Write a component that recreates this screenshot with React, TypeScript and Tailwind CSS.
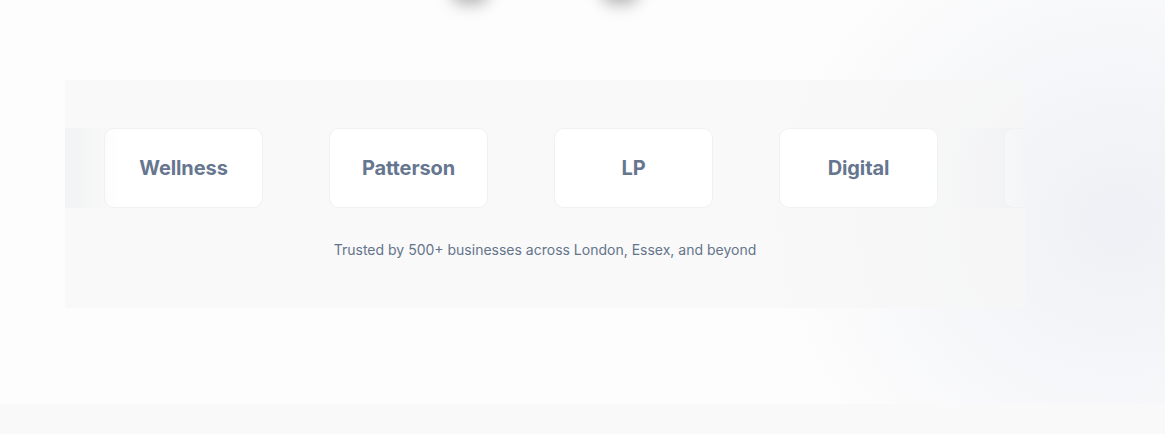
import React from "react";

const logos = ["Wellness", "Patterson", "LP", "Digital", ""];

export default function App() {
  return (
    <div className="relative w-[1165px] h-[434px] overflow-hidden bg-[#fdfdfd] font-['Inter',sans-serif]">
      {/* background glow right */}
      <div className="pointer-events-none absolute left-[760px] top-[-120px] w-[720px] h-[680px] rounded-full bg-[radial-gradient(closest-side,rgba(236,238,244,0.85),rgba(242,243,247,0.5)_60%,rgba(253,253,253,0))]" />
      {/* top shadow blobs */}
      <div className="pointer-events-none absolute left-[451px] top-[-22px] w-[38px] h-[26px] rounded-full bg-[rgba(0,0,0,0.3)] blur-[8px]" />
      <div className="pointer-events-none absolute left-[601px] top-[-22px] w-[38px] h-[26px] rounded-full bg-[rgba(0,0,0,0.3)] blur-[8px]" />

      <div className="relative pt-[80px]">
        <section className="ml-[65px] w-[960px] h-[228px] bg-[rgba(246,246,247,0.7)] flex flex-col">
          <div className="relative mt-[48px] h-[80px] overflow-hidden">
            <div className="flex gap-[66px] pl-[39px]">
              {logos.map((l, i) => (
                <div
                  key={i}
                  className="shrink-0 w-[159px] h-[80px] rounded-[10px] bg-white border border-[#f0f1f3] flex items-center justify-center"
                >
                  <span className="text-[20px] font-bold text-[#66768f] tracking-[-0.1px]">{l}</span>
                </div>
              ))}
            </div>
            <div className="pointer-events-none absolute left-0 top-0 h-full w-[56px] bg-gradient-to-r from-[rgba(240,241,243,0.7)] to-transparent" />
            <div className="pointer-events-none absolute right-0 top-0 h-full w-[80px] bg-gradient-to-l from-[rgba(240,241,244,0.7)] to-transparent" />
          </div>
          <p className="mt-[31px] text-center text-[14px] text-[#64748b]">
            Trusted by 500+ businesses across London, Essex, and beyond
          </p>
        </section>
        <div className="h-[96px]" />
        <div className="h-[30px] bg-[#f9f9f9]" />
      </div>
    </div>
  );
}
